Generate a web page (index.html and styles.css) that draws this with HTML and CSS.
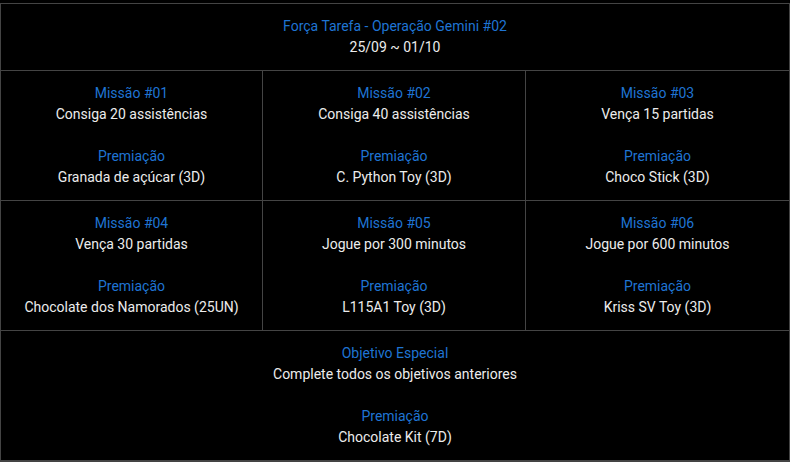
FILE: index.html
```html
<!DOCTYPE html>
<html>
<head>
  <meta charset="UTF-8">
  <title>Força Tarefa - Operação Gemini #02</title>
  <link rel="stylesheet" href="styles.css">
</head>
<body>
  <div class="page">
    <table class="missions">
      <colgroup>
        <col class="col-a">
        <col class="col-b">
        <col>
      </colgroup>
      <tr>
        <td colspan="3" class="head">
          <span class="label">Força Tarefa - Operação Gemini #02</span><br>
          25/09 ~ 01/10
        </td>
      </tr>
      <tr>
        <td>
          <span class="label">Missão #01</span><br>
          Consiga 20 assistências<br><br>
          <span class="label">Premiação</span><br>
          Granada de açúcar (3D)
        </td>
        <td>
          <span class="label">Missão #02</span><br>
          Consiga 40 assistências<br><br>
          <span class="label">Premiação</span><br>
          C. Python Toy (3D)
        </td>
        <td>
          <span class="label">Missão #03</span><br>
          Vença 15 partidas<br><br>
          <span class="label">Premiação</span><br>
          Choco Stick (3D)
        </td>
      </tr>
      <tr>
        <td>
          <span class="label">Missão #04</span><br>
          Vença 30 partidas<br><br>
          <span class="label">Premiação</span><br>
          Chocolate dos Namorados (25UN)
        </td>
        <td>
          <span class="label">Missão #05</span><br>
          Jogue por 300 minutos<br><br>
          <span class="label">Premiação</span><br>
          L115A1 Toy (3D)
        </td>
        <td>
          <span class="label">Missão #06</span><br>
          Jogue por 600 minutos<br><br>
          <span class="label">Premiação</span><br>
          Kriss SV Toy (3D)
        </td>
      </tr>
      <tr>
        <td colspan="3">
          <span class="label">Objetivo Especial</span><br>
          Complete todos os objetivos anteriores<br><br>
          <span class="label">Premiação</span><br>
          Chocolate Kit (7D)
        </td>
      </tr>
    </table>
  </div>
</body>
</html>
```

FILE: styles.css
```css
body {
  margin: 0;
  background-color: #fff;
}

.page {
  width: 790px;
  padding-top: 3px;
  background-color: #000;
}

.missions {
  width: 790px;
  border-collapse: collapse;
  background-color: #000;
  font-family: Roboto, Arial, sans-serif;
  font-size: 14px;
  line-height: 21px;
  color: #ececec;
  table-layout: fixed;
  border-bottom: 2px solid #444;
}

.col-a {
  width: 262px;
}

.col-b {
  width: 263px;
}

.missions td {
  border: 1px solid #444;
  text-align: center;
  padding: 12px 2px;
  vertical-align: middle;
}

.label {
  color: #1f74d3;
}
```
